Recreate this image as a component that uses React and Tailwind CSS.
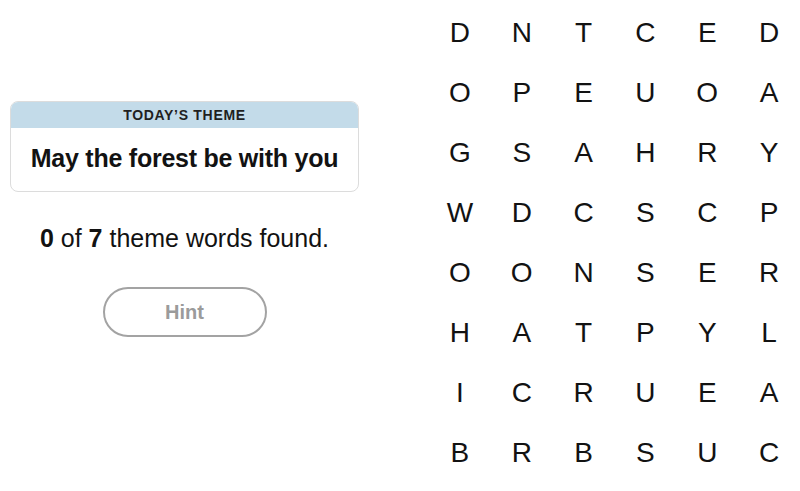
const GRID = [
  ["D", "N", "T", "C", "E", "D"],
  ["O", "P", "E", "U", "O", "A"],
  ["G", "S", "A", "H", "R", "Y"],
  ["W", "D", "C", "S", "C", "P"],
  ["O", "O", "N", "S", "E", "R"],
  ["H", "A", "T", "P", "Y", "L"],
  ["I", "C", "R", "U", "E", "A"],
  ["B", "R", "B", "S", "U", "C"],
];

export default function App() {
  return (
    <div className="w-[800px] h-[491px] bg-white flex overflow-hidden font-['Liberation_Sans',Arial,sans-serif] text-[#121212]">
      {/* Left panel */}
      <div className="w-[369px] shrink-0 px-[10px] pt-[101px] flex flex-col items-center">
        <div className="w-full rounded-lg border border-[#dcdcdc] overflow-hidden">
          <div className="h-[26px] bg-[#c3dbe9] flex items-center justify-center text-[14px] font-bold tracking-[0.05em] text-[#1f1f1f]">
            TODAY’S THEME
          </div>
          <div className="h-[63px] flex items-center justify-center text-[25px] font-bold tracking-[-0.01em] pb-[2px]">
            May the forest be with you
          </div>
        </div>

        <p className="mt-[31px] text-[25px] leading-[30px]">
          <span className="font-bold">0</span> of <span className="font-bold">7</span> theme words found.
        </p>

        <button className="mt-[34px] w-[164px] h-[50px] rounded-full border-2 border-[#a3a3a3] text-[20px] font-bold text-[#9b9b9b]">
          Hint
        </button>
      </div>

      {/* Letter grid */}
      <div className="ml-[60px] pt-[3px] grid grid-cols-6 w-[372px] auto-rows-[60px]">
        {GRID.flat().map((ch, i) => (
          <div key={i} className="flex items-center justify-center text-[28px] leading-none">
            {ch}
          </div>
        ))}
      </div>
    </div>
  );
}
